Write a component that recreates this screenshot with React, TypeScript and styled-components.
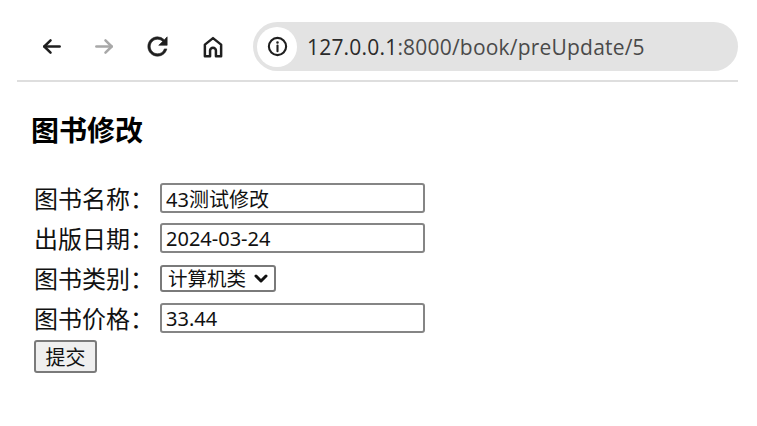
import * as React from "react"
import styled, { createGlobalStyle } from "styled-components"

const GlobalStyle = createGlobalStyle`
  html, body {
    margin: 0;
    padding: 0;
    background: #ffffff;
  }
  body {
    font-family: "Noto Sans", "Noto Sans CJK SC", sans-serif;
    color: #000000;
  }
`

const Toolbar = styled.div`
  display: flex;
  align-items: center;
  height: 49px;
  padding: 22px 19px 9px 33px;
`

const NavButton = styled.div<{ $shift?: number }>`
  display: flex;
  align-items: center;
  justify-content: center;
  width: 36px;
  height: 36px;
  margin-right: 17px;
  margin-left: ${(p) => p.$shift || 0}px;
  flex-shrink: 0;
`

const Omnibox = styled.div`
  display: flex;
  align-items: center;
  margin-left: 5px;
  flex: 1;
  height: 49px;
  border-radius: 25px;
  background: #e3e3e3;
  padding-left: 4px;
`

const SiteChip = styled.div`
  display: flex;
  align-items: center;
  justify-content: center;
  width: 40px;
  height: 40px;
  border-radius: 50%;
  background: #ffffff;
  flex-shrink: 0;
`

const UrlText = styled.div`
  margin-left: 10px;
  font-family: "Open Sans", "Noto Sans", sans-serif;
  font-size: 21px;
  color: #4a4a4a;
  white-space: nowrap;
  letter-spacing: 0.2px;
`

const Host = styled.span`
  color: #2a2a2a;
`

const Divider = styled.div`
  height: 2px;
  margin: 0 19px 0 17px;
  background: #dedede;
`

const Page = styled.div`
  padding: 29px 0 0 31px;
`

const Title = styled.h3`
  margin: 0 0 31px 0;
  font-family: "Noto Sans CJK SC", sans-serif;
  font-size: 28px;
  font-weight: 700;
  line-height: 36px;
`

const Form = styled.form`
  display: flex;
  flex-direction: column;
  align-items: flex-start;
`

const Row = styled.div`
  display: flex;
  align-items: center;
  height: 40px;
`

const Label = styled.label`
  width: 126px;
  padding-left: 3px;
  font-family: "Noto Sans CJK SC", sans-serif;
  font-size: 24px;
  line-height: 30px;
  color: #111111;
`

const TextInput = styled.input`
  box-sizing: border-box;
  width: 265px;
  height: 30px;
  padding: 0 4px;
  border: 2px solid #858585;
  border-radius: 3px;
  font-family: "Noto Sans", "Noto Sans CJK SC", sans-serif;
  font-size: 20px;
  color: #111111;
  outline: none;
`

const SelectBox = styled.div`
  position: relative;
  width: 116px;
  height: 27px;
`

const Select = styled.select`
  box-sizing: border-box;
  width: 100%;
  height: 100%;
  appearance: none;
  padding: 0 0 0 6px;
  border: 2px solid #7a7a7a;
  border-radius: 3px;
  background: #ffffff;
  font-family: "Noto Sans CJK SC", sans-serif;
  font-size: 19.5px;
  line-height: 22px;
  color: #111111;
  outline: none;
`

const Chevron = styled.svg`
  position: absolute;
  right: 8px;
  top: 8px;
  pointer-events: none;
`

const SubmitButton = styled.button`
  box-sizing: border-box;
  margin: 2px 0 0 3px;
  width: 63px;
  height: 33px;
  padding: 0;
  border: 2px solid #7a7a7a;
  border-radius: 3px;
  background: #efefef;
  font-family: "Noto Sans CJK SC", sans-serif;
  font-size: 20px;
  color: #111111;
`

const BackIcon = ({ color }: { color: string }) => (
  <svg width="23" height="23" viewBox="0 0 24 24" fill="none" stroke={color} strokeWidth="2.6" strokeLinecap="round" strokeLinejoin="round">
    <path d="M20.5 12H4.5" />
    <path d="M11 5.5 4.5 12 11 18.5" />
  </svg>
)

const ForwardIcon = ({ color }: { color: string }) => (
  <svg width="23" height="23" viewBox="0 0 24 24" fill="none" stroke={color} strokeWidth="2.6" strokeLinecap="round" strokeLinejoin="round">
    <path d="M3.5 12H19.5" />
    <path d="M13 5.5 19.5 12 13 18.5" />
  </svg>
)

const ReloadIcon = () => (
  <svg width="29" height="29" viewBox="0 0 24 24" fill="#1f1f1f" stroke="#1f1f1f" strokeWidth="0.5">
    <path d="M17.65 6.35A7.958 7.958 0 0 0 12 4c-4.42 0-7.99 3.58-7.99 8s3.57 8 7.99 8c3.73 0 6.84-2.55 7.73-6h-2.08A5.99 5.99 0 0 1 12 18c-3.31 0-6-2.690-6-6s2.69-6 6-6c1.66 0 3.14.69 4.22 1.78L13 11h7V4l-2.35 2.35z" />
  </svg>
)

const HomeIcon = () => (
  <svg width="26" height="26" viewBox="0 0 24 24" fill="none" stroke="#1f1f1f" strokeWidth="2.3" strokeLinejoin="round">
    <path d="M4.5 20.5V9.8L12 3.8l7.5 6v10.7h-4.8v-5.2a2.7 2.7 0 0 0-5.4 0v5.2H4.5z" />
  </svg>
)

const InfoIcon = () => (
  <svg width="23" height="23" viewBox="0 0 24 24" fill="none" stroke="#1f1f1f" strokeWidth="2.2">
    <circle cx="12" cy="12" r="9" />
    <path d="M12 11v6" strokeLinecap="round" />
    <circle cx="12" cy="7.8" r="0.6" fill="#1f1f1f" strokeWidth="1.5" />
  </svg>
)

export default function App() {
  return (
    <>
      <GlobalStyle />
      <Toolbar>
        <NavButton>
          <BackIcon color="#1f1f1f" />
        </NavButton>
        <NavButton>
          <ForwardIcon color="#a8a8a8" />
        </NavButton>
        <NavButton>
          <ReloadIcon />
        </NavButton>
        <NavButton $shift={3}>
          <HomeIcon />
        </NavButton>
        <Omnibox>
          <SiteChip>
            <InfoIcon />
          </SiteChip>
          <UrlText>
            <Host>127.0.0.1</Host>:8000/book/preUpdate/5
          </UrlText>
        </Omnibox>
      </Toolbar>
      <Divider />
      <Page>
        <Title>图书修改</Title>
        <Form onSubmit={(e) => e.preventDefault()}>
          <Row>
            <Label>图书名称：</Label>
            <TextInput defaultValue="43测试修改" />
          </Row>
          <Row>
            <Label>出版日期：</Label>
            <TextInput defaultValue="2024-03-24" />
          </Row>
          <Row>
            <Label>图书类别：</Label>
            <SelectBox>
              <Select defaultValue="1">
                <option value="1">计算机类</option>
              </Select>
              <Chevron width="14" height="11" viewBox="0 0 14 11" fill="none" stroke="#111111" strokeWidth="3" strokeLinecap="round" strokeLinejoin="round">
                <path d="M2 3l5 5 5-5" />
              </Chevron>
            </SelectBox>
          </Row>
          <Row>
            <Label>图书价格：</Label>
            <TextInput defaultValue="33.44" />
          </Row>
          <SubmitButton type="submit">提交</SubmitButton>
        </Form>
      </Page>
    </>
  )
}
